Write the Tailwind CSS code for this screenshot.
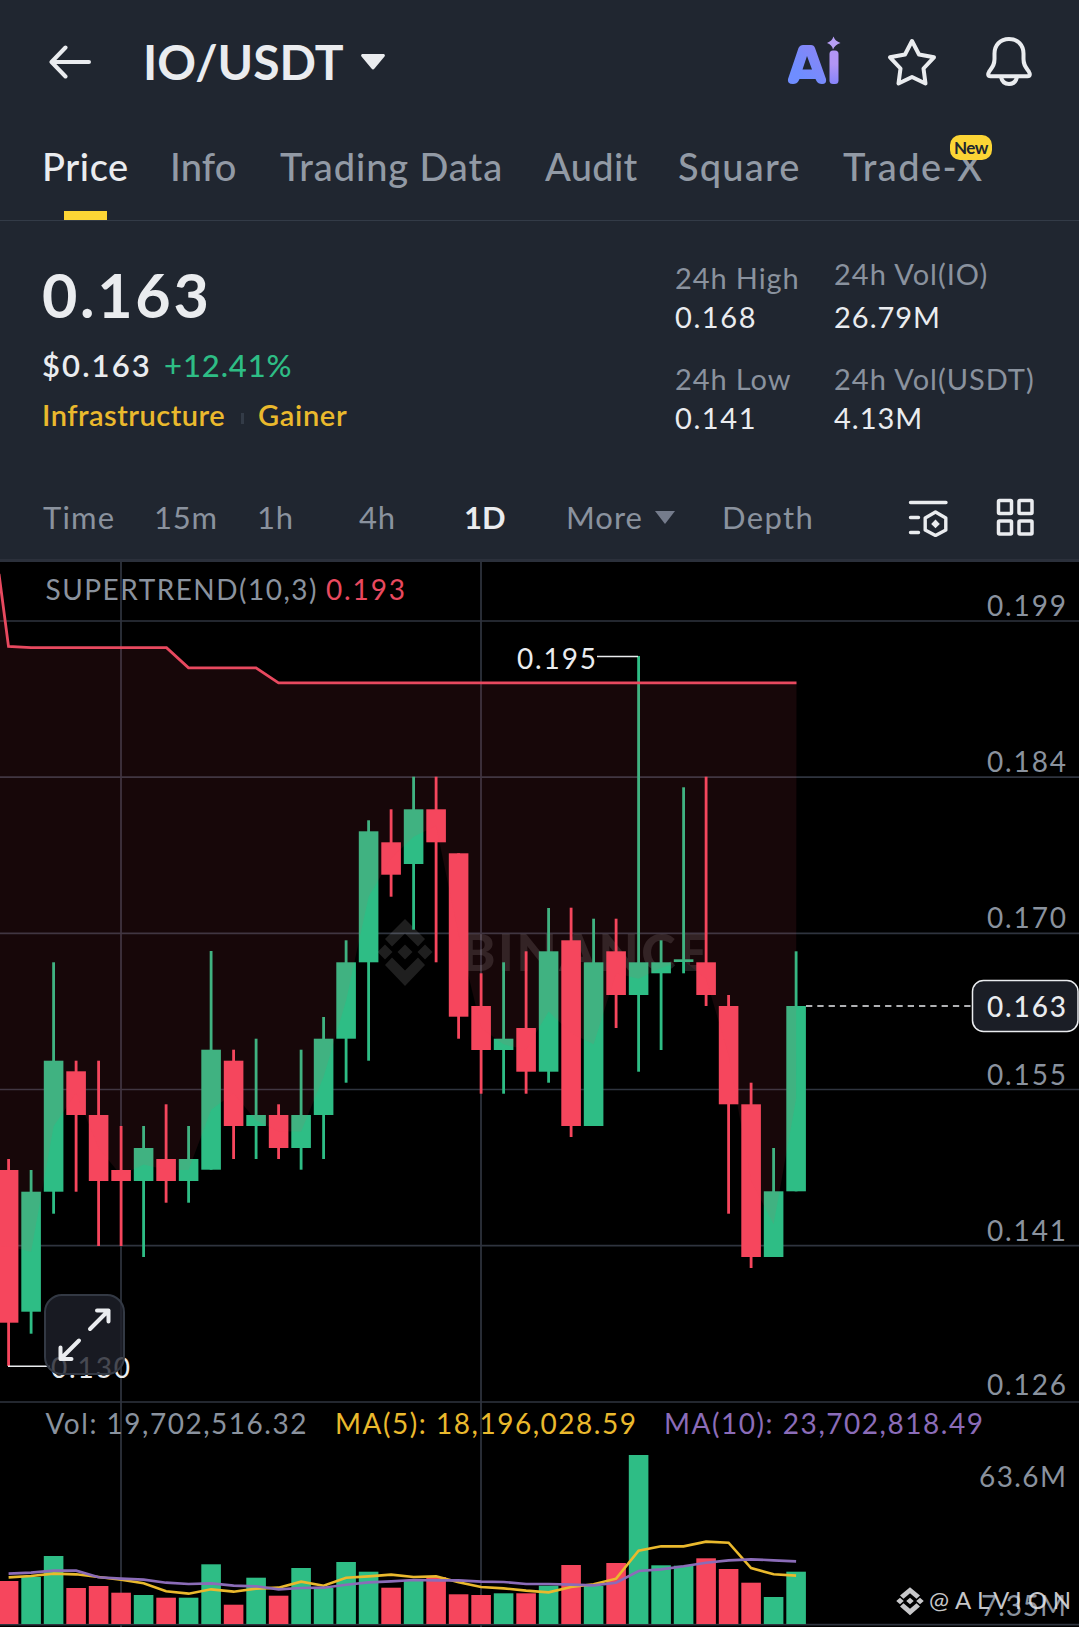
<!DOCTYPE html>
<html lang="en">
<head>
    <meta charset="UTF-8">
    <meta name="viewport" content="width=device-width, initial-scale=1.0">
    <title>IO/USDT</title>
    <script src="https://cdn.jsdelivr.net/npm/@tailwindcss/browser@4"></script>
</head>
<body class="w-[1079px] h-[1627px] overflow-hidden bg-[#202630] font-['Lato','Liberation_Sans',sans-serif] text-[#eaecef] whitespace-nowrap">
    <!-- Header -->
    <header class="h-[123px] flex items-center">
        <svg class="w-[42px] h-[36px] ml-[49px]" viewBox="0 0 42 36" fill="none" stroke="currentColor" stroke-width="4" stroke-linecap="round" stroke-linejoin="round">
            <path d="M40 18H3M16.500 3.500L2.500 18L16.500 32.500"></path>
        </svg>
        <h1 class="w-[218px] ml-[52px] text-[48px] font-bold">IO/USDT</h1>
        <svg class="w-[24px] h-[16px]" viewBox="0 0 24 16" fill="currentColor">
            <path d="M1 0H23Q24.500 1 23.500 2.500L13.500 14.500Q12 16.500 10.500 14.500L0.500 2.500Q-0.500 1 1 0Z"></path>
        </svg>
        <svg class="w-[54px] h-[50px] ml-[402px] -mt-[2px]" viewBox="0 0 54 50">
            <defs>
                <linearGradient id="aiFill" x1="0" y1="1" x2="1" y2="0">
                    <stop offset="0.3" stop-color="#6f8dff"></stop>
                    <stop offset="1" stop-color="#8f84f4"></stop>
                </linearGradient>
                <linearGradient id="iFill" x1="0" y1="1" x2="0" y2="0">
                    <stop offset="0" stop-color="#8784fa"></stop>
                    <stop offset="0.6" stop-color="#b296f5"></stop>
                </linearGradient>
            </defs>
            <path fill="url(#aiFill)" fill-rule="evenodd" d="M16 9H24Q27 9 28 12L39 43Q40 48 35 48Q31 48 29.500 45L28.500 43H12.500L11.500 45Q10 48 6 48Q0 48 1 43L11.500 12Q13 9 16 9ZM20 20L15.500 33.500H25Z"></path>
            <rect x="42.500" y="14.500" width="9" height="33.500" rx="3.500" fill="url(#iFill)"></rect>
            <path fill="#b79ff5" d="M46.500 0.500Q48 5 53.500 7Q48 8.500 46 13.500Q45 8.500 40 7Q45 5 46.500 0.500Z"></path>
        </svg>
        <svg class="w-[50px] h-[50px] ml-[46px]" viewBox="0 0 50 50" fill="none" stroke="currentColor" stroke-width="4" stroke-linejoin="round">
            <path d="M25 4L32 17.500L47 20.300L36.500 31.500L38.500 46.500L25 40L11.500 46.500L13.500 31.500L3 20.300L18 17.500Z"></path>
        </svg>
        <svg class="w-[50px] h-[52px] ml-[47px] -mt-[1px]" viewBox="0 0 50 52" fill="none" stroke="currentColor" stroke-width="4" stroke-linejoin="round">
            <path d="M25 4C16 4 10.500 10.500 10.500 18.500V24C10.500 30 8.500 32 5.500 36Q2.500 41.300 6.500 41.300H43.500Q47.500 41.300 44.500 36C41.500 32 39.500 30 39.500 24V18.500C39.500 10.500 34 4 25 4Z"></path>
            <path d="M17 42C18 46.500 21 49 25 49S32 46.500 33 42"></path>
        </svg>
    </header>

    <!-- Tabs -->
    <nav class="h-[98px] pt-[23px] pl-[42px] flex items-start border-b border-[#333b47] text-[38px] leading-[40px] font-medium text-[#929aa5]">
        <div class="w-[128px] h-[74px] relative text-[#eaecef] tracking-[0.6px]">Price
            <div class="absolute left-[22px] bottom-0 w-[43px] h-[9px] bg-[#fcd535]"></div>
        </div>
        <div class="w-[110px] tracking-[0.2px]">Info</div>
        <div class="w-[265px] tracking-[0.9px]">Trading Data</div>
        <div class="w-[133px] tracking-[0.3px]">Audit</div>
        <div class="w-[165px] tracking-[1.2px]">Square</div>
        <div class="relative tracking-[1.4px]">Trade-X
            <span class="absolute left-[107px] top-[-11px] w-[42px] h-[25px] rounded-[10px] bg-[#fcd535] text-[#202630] text-[17px] leading-[25px] font-bold text-center tracking-[-0.5px]">New</span>
        </div>
    </nav>

    <!-- Price and 24h stats -->
    <section class="h-[254px] flex pl-[42px]">
        <div class="w-[633px] pt-[44px]">
            <p class="text-[61px] leading-[60px] font-bold tracking-[2.7px]">0.163</p>
            <p class="mt-[20px] flex text-[31px] leading-[40px]">
                <span class="w-[122px] font-semibold tracking-[2.1px]">$0.163</span>
                <span class="font-medium tracking-[0.9px] text-[#2ebd85]">+12.41%</span>
            </p>
            <p class="mt-[10px] flex items-center text-[29px] leading-[40px] font-semibold text-[#eab92d]">
                <span class="w-[199px] tracking-[0.5px]">Infrastructure</span>
                <span class="w-[3px] h-[11px] mt-[7px] mr-[14px] bg-[#333b47]"></span>
                <span class="tracking-[0.7px]">Gainer</span>
            </p>
        </div>
        <div class="w-[159px] pt-[42px] text-[29px] leading-[30px] tracking-[0.9px]">
            <p class="text-[#8a929e]">24h High</p>
            <p class="mt-[9px] tracking-[1.6px]">0.168</p>
            <p class="mt-[32px] text-[#8a929e]">24h Low</p>
            <p class="mt-[9px] tracking-[1.6px]">0.141</p>
        </div>
        <div class="pt-[38px] text-[29px] leading-[30px] tracking-[1px]">
            <p class="text-[#8a929e]">24h Vol(IO)</p>
            <p class="mt-[13px]">26.79M</p>
            <p class="mt-[32px] text-[#8a929e]">24h Vol(USDT)</p>
            <p class="mt-[9px]">4.13M</p>
        </div>
    </section>

    <!-- Chart intervals -->
    <section class="h-[87px] flex items-center pl-[43px] border-b-[3px] border-[#2b303b] text-[31px] text-[#8a929e]">
        <span class="w-[111px] tracking-[1.2px]">Time</span>
        <span class="w-[103px] tracking-[0.8px]">15m</span>
        <span class="w-[102px] tracking-[0.8px]">1h</span>
        <span class="w-[105px] tracking-[0.8px]">4h</span>
        <span class="w-[102px] font-bold text-[#eaecef]">1D</span>
        <span class="w-[89px] tracking-[1px]">More</span>
        <svg class="w-[20px] h-[13px]" viewBox="0 0 20 13" fill="#757c8c"><path d="M0 0H20L10 13Z"></path></svg>
        <span class="w-[186px] ml-[47px] tracking-[1.4px]">Depth</span>
        <svg class="w-[40px] h-[40px]" viewBox="0 0 40 40" fill="none" stroke="#eaecef" stroke-width="3.400" stroke-linecap="round" stroke-linejoin="round">
            <path d="M2.500 5.500H38M2.500 20.500H10.500M2.500 35.500H10.500"></path>
            <path d="M27.500 15L37.800 21V33L27.500 38.500L17.200 33V21Z"></path>
            <path d="M27.500 22.500L31.800 27L27.500 31.300L23.200 27Z" fill="#eaecef" stroke="none"></path>
        </svg>
        <svg class="w-[38px] h-[38px] ml-[48px]" viewBox="0 0 38 38" fill="none" stroke="#eaecef" stroke-width="3.500">
            <rect x="2.500" y="2.500" width="13" height="13" rx="1"></rect>
            <rect x="23" y="2.500" width="13" height="13" rx="1"></rect>
            <rect x="2.500" y="23" width="13" height="13" rx="1"></rect>
            <rect x="23" y="23" width="13" height="13" rx="1"></rect>
        </svg>
    </section>

    <!-- Chart -->
    <main class="relative h-[1065px] bg-black">
        <svg class="block w-[1079px] h-[1065px] text-[28px]" viewBox="0 562 1079 1065">
            <g stroke="#2f343f" stroke-width="1.700">
                <path d="M0 621H1079M0 777.200H1079M0 933.300H1079M0 1089.500H1079M0 1245.700H1079M0 1402H1079M0 1624.700H1079"></path>
                <path d="M121 562V1627M481 562V1627"></path>
            </g>

            <!-- Watermark -->
            <g fill="#ffffff" fill-opacity="0.12">
                <path id="brand" d="M405 919L425 939L418 946.500L405 933.500L392 946.500L385 939ZM385 965L392 957.500L405 970.500L418 957.500L425 965L405 986ZM405 944.500L412.500 952L405 959.500L397.500 952ZM385 944.500L392.500 952L385 959.500L377.500 952ZM425 944.500L432.500 952L425 959.500L417.500 952Z"></path>
                <text x="461" y="970.500" textLength="247" font-size="52" font-weight="900">BINANCE</text>
            </g>

            <g id="candles"></g>
            <path id="trendFill" fill="#f6465d" fill-opacity="0.095"></path>
            <path id="trendLine" fill="none" stroke="#e8495f" stroke-width="2.800"></path>
            <g id="volume"></g>
            <path id="ma5" fill="none" stroke="#eab92d" stroke-width="2.600"></path>
            <path id="ma10" fill="none" stroke="#8b6cb8" stroke-width="2.600"></path>

            <!-- High / low callouts -->
            <path d="M597 656.500H638M8 1366.300H50" stroke="#eaecef" stroke-width="1.500"></path>
            <path d="M806 1006H971" stroke="#eaecef" stroke-width="1.600" stroke-dasharray="6.300 5"></path>
            <g fill="#eaecef">
                <text x="517" y="668.500" textLength="79">0.195</text>
                <text x="51" y="1378" textLength="79">0.130</text>
            </g>

            <!-- Indicator legends -->
            <text x="45.500" y="599.500" textLength="271" fill="#8a929e">SUPERTREND(10,3)</text>
            <text x="326" y="599.500" textLength="79" fill="#e8495f">0.193</text>
            <text x="45.500" y="1433.500" textLength="261" fill="#8a929e">Vol: 19,702,516.32</text>
            <text x="335" y="1433.500" textLength="301" fill="#eab92d">MA(5): 18,196,028.59</text>
            <text x="664" y="1433.500" textLength="319" fill="#8b6cb8">MA(10): 23,702,818.49</text>

            <!-- Axis -->
            <g fill="#8a929e">
                <text x="987" y="615.500" textLength="79">0.199</text>
                <text x="987" y="772" textLength="79">0.184</text>
                <text x="987" y="928.300" textLength="79">0.170</text>
                <text x="987" y="1084.500" textLength="79">0.155</text>
                <text x="987" y="1240.500" textLength="79">0.141</text>
                <text x="987" y="1394.500" textLength="79">0.126</text>
                <text x="979" y="1486.500" textLength="87">63.6M</text>
                <text x="981" y="1616" textLength="85">7.35M</text>
            </g>
            <rect x="972.500" y="980.500" width="105.500" height="51" rx="11" fill="#1b1e26" stroke="#eaecef" stroke-width="1.500"></rect>
            <text x="987" y="1017" textLength="79" font-weight="500" fill="#eaecef">0.163</text>

            <!-- Author tag -->
            <g fill="#e4e4e6" fill-opacity="0.88">
                <use href="#brand" transform="translate(910 1601) scale(0.5 0.42) translate(-405 -952)"></use>
                <text x="929" y="1609" textLength="142" font-size="24">@ALVION</text>
            </g>
        </svg>

        <!-- Fullscreen -->
        <button class="absolute left-[44px] top-[732px] w-[81px] h-[81px] rounded-[18px] border-[2.5px] border-[#333944] bg-[#1e212a]/80">
            <svg class="absolute left-[-2.5px] top-[-2.5px] w-[81px] h-[81px]" viewBox="44 1294 81 81" fill="none" stroke="#eaecef" stroke-width="4" stroke-linecap="round" stroke-linejoin="round">
                <path d="M90 1329L108.500 1310.500M97 1310.500H108.500V1321.500M79 1340.500L60.500 1359M60.500 1347.500V1359H71.500"></path>
            </svg>
        </button>
    </main>

    <script>
        const UP = '#2ebd85';
        const DOWN = '#f6465d';
        const WIDTH = 19.6;
        const BASE = 1624;

        // [direction, high, body top, body bottom, low, volume top]
        const candles = [
            [0, 1159, 1170, 1322.7, 1366, 1581],
            [1, 1170, 1191.7, 1311.7, 1333.7, 1577],
            [1, 962.3, 1060.7, 1191.7, 1213.7, 1556],
            [0, 1060.7, 1071.3, 1115, 1191.7, 1588],
            [0, 1060.7, 1115, 1181, 1246, 1586],
            [0, 1126, 1170, 1181, 1246, 1592.7],
            [1, 1126, 1148, 1181, 1257, 1595],
            [0, 1104.3, 1159, 1181, 1202.7, 1597.7],
            [1, 1126, 1159, 1181, 1202.7, 1597.7],
            [1, 951, 1049.7, 1169.7, 1169.7, 1564.3],
            [0, 1049.7, 1060.7, 1126, 1159, 1604.7],
            [1, 1038.7, 1115, 1126, 1159, 1577.7],
            [0, 1104.3, 1115, 1148, 1159, 1595.7],
            [1, 1049.7, 1115, 1148, 1169.7, 1568],
            [1, 1017, 1038.7, 1115, 1159, 1588],
            [1, 940.3, 962.3, 1038.7, 1082.7, 1562],
            [1, 820.3, 831.3, 962.3, 1060.7, 1571.7],
            [0, 809.3, 842.3, 874.7, 896.7, 1587.7],
            [1, 776.7, 809.3, 864, 929.7, 1580.7],
            [0, 776.7, 809.3, 842.3, 962.3, 1577],
            [0, 853.3, 853.3, 1016.7, 1038.7, 1594.3],
            [0, 973.3, 1006, 1050, 1093.7, 1595],
            [1, 962.3, 1038.7, 1050, 1093.7, 1593.3],
            [0, 951.3, 1028, 1071.7, 1093.7, 1593.3],
            [1, 908, 951.3, 1071.7, 1082.7, 1585.7],
            [0, 907.7, 940.3, 1126, 1137, 1565],
            [1, 918.7, 962.3, 1126, 1126, 1586],
            [0, 918.7, 951.3, 995, 1028, 1563],
            [1, 656, 962.3, 995, 1071.7, 1455],
            [1, 940.3, 962.3, 973.3, 1050, 1565.3],
            [1, 787.3, 959.3, 962, 973.3, 1565.7],
            [0, 776.7, 962.3, 995, 1006, 1558.3],
            [0, 995, 1006, 1104.3, 1213.7, 1569],
            [0, 1082.7, 1104.3, 1257, 1268, 1582.7],
            [1, 1148, 1191.3, 1257, 1257, 1597],
            [1, 951.3, 1006, 1191.3, 1191.3, 1571.7]
        ];
        const ma5 = [562, 558, 551, 553, 561, 569, 580, 604, 611, 598, 605, 596, 593, 575, 587, 563, 559, 554, 561, 559, 577, 591, 595, 602, 607, 591, 583, 566, 482, 469, 469, 455, 458, 534, 553, 557];
        const ma10 = [551, 548, 542, 542, 562, 566, 569, 578, 582, 580, 587, 589, 598, 594, 593, 584, 577, 574, 570, 571, 571, 575, 576, 582, 582, 584, 586, 578, 543, 538, 529, 518, 511, 508, 511, 514];
        const trend = 'M-1 574L8.500 646.500L31 647.700H166.500L188.500 667.800H256L278.500 682.800H796.500';

        const xAt = i => 8.6 + 22.5 * i;
        const rect = (x, y, w, h, fill) => `<rect x="${x}" y="${y}" width="${w}" height="${h}" fill="${fill}"/>`;
        const byId = id => document.getElementById(id);

        byId('candles').innerHTML = candles.map(([up, high, top, bottom, low], i) => {
            const fill = up ? UP : DOWN;
            return rect(xAt(i) - 1.4, high, 2.8, low - high, fill) + rect(xAt(i) - WIDTH / 2, top, WIDTH, bottom - top, fill);
        }).join('');
        byId('volume').innerHTML = candles.map((c, i) => rect(xAt(i) - WIDTH / 2, c[5], WIDTH, BASE - c[5], c[0] ? UP : DOWN)).join('');

        // Shade between the trend line and the middle of every candle body
        const mids = candles.map((c, i) => `L${xAt(i)} ${(c[2] + c[3]) / 2}`).reverse().join('');
        byId('trendFill').setAttribute('d', trend + mids + 'L-1 1246Z');
        byId('trendLine').setAttribute('d', trend);

        const line = values => 'M' + values.map((v, i) => `${xAt(i)} ${1390 + v / 3}`).join('L');
        byId('ma5').setAttribute('d', line(ma5));
        byId('ma10').setAttribute('d', line(ma10));
    </script>
</body>
</html>
